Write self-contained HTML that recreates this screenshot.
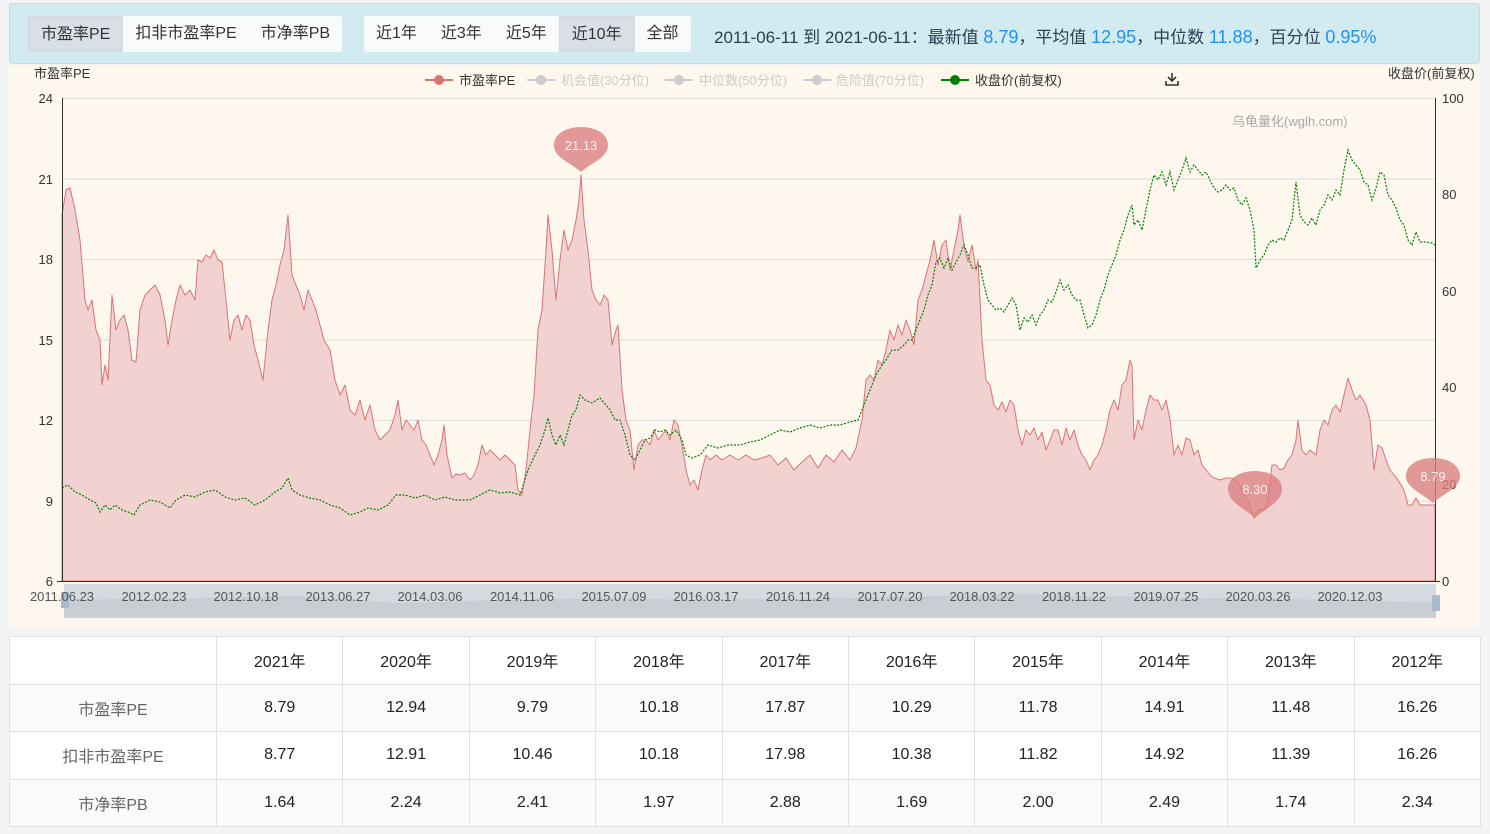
<!DOCTYPE html>
<html><head><meta charset="utf-8"><style>
*{margin:0;padding:0;box-sizing:border-box}
body{width:1490px;height:834px;background:#f4f4f5;font-family:"Liberation Sans","Noto Sans CJK SC",sans-serif;position:relative;overflow:hidden}
.top{position:absolute;left:9px;top:3px;width:1471px;height:61px;background:#d1ebf0;border:1px solid #b8e0ea;border-radius:3px}
.grp{position:absolute;top:12px;height:36px;background:#f8fafc;border-radius:3px;display:flex}
.grp span{display:block;height:36px;line-height:36px;font-size:16px;color:#333;padding:0 12px}
.grp span.act{background:#d9dfe6;border:1px solid #d2d8de}
.info{position:absolute;left:704px;top:19px;font-size:17px;color:#2c3e50;white-space:nowrap}
.info b{font-weight:normal;color:#1e90ff;font-size:18px}
.chart{position:absolute;left:9px;top:66px;width:1471px;height:561px;background:#fdf7ee}
table{position:absolute;left:9px;top:636px;width:1472px;border-collapse:collapse;background:#fff}
td{border:1px solid #dfe1e6;text-align:center;font-size:16px;color:#222;height:47.5px}
td.h{color:#666;width:207px}
tr:nth-child(2) td,tr:nth-child(4) td{background:#fafafa}
</style></head><body>
<div class="top">
<div class="grp" style="left:18px"><span class="act">市盈率PE</span><span>扣非市盈率PE</span><span>市净率PB</span></div>
<div class="grp" style="left:354px"><span>近1年</span><span>近3年</span><span>近5年</span><span class="act">近10年</span><span>全部</span></div>
<div class="info">2011-06-11 到 2021-06-11：最新值 <b>8.79</b>，平均值 <b>12.95</b>，中位数 <b>11.88</b>，百分位 <b>0.95%</b></div>
</div>
<div class="chart"></div>
<svg style="position:absolute;left:0;top:0" width="1490" height="630" font-family="Liberation Sans,Noto Sans CJK SC,sans-serif">
<g stroke="#dcdcdc" stroke-width="1">
<line x1="62" x2="1435" y1="98.5" y2="98.5"/><line x1="62" x2="1435" y1="179" y2="179"/><line x1="62" x2="1435" y1="259.5" y2="259.5"/><line x1="62" x2="1435" y1="340" y2="340"/><line x1="62" x2="1435" y1="420.5" y2="420.5"/><line x1="62" x2="1435" y1="501" y2="501"/>
</g>
<polygon fill="#f2d2d0" stroke="#d97474" stroke-width="1" stroke-linejoin="round" points="62,215 66,190 70,188 75,210 80,240 85,300 88,310 92,300 96,330 100,340 102,385 105,365 108,380 112,295 116,330 120,320 124,315 128,330 132,360 136,362 140,310 145,295 150,290 155,285 160,295 165,320 168,345 172,320 176,300 180,285 185,295 190,290 195,300 198,260 202,262 206,255 210,258 214,250 218,260 222,262 226,300 230,340 234,320 238,315 242,330 246,315 250,320 254,345 258,360 263,380 268,330 272,300 276,285 280,265 284,250 288,215 292,275 296,285 300,295 304,310 308,290 312,300 316,310 320,325 324,340 330,350 335,380 340,395 345,385 350,410 355,415 360,400 365,420 370,405 375,430 380,440 385,435 390,430 395,415 398,400 402,430 406,420 410,425 414,430 418,420 422,440 426,445 430,455 434,465 438,455 442,440 444,425 447,455 452,478 456,474 460,475 465,473 470,480 474,475 478,465 482,445 486,455 490,450 495,455 500,460 505,455 510,460 515,465 518,490 522,495 526,470 530,430 534,395 538,330 542,310 546,250 548,215 552,250 556,300 560,260 564,230 568,250 572,240 576,220 579,200 581,175 584,220 588,250 592,290 596,300 600,305 604,295 608,300 612,345 616,330 618,325 622,390 626,420 630,430 634,470 638,445 642,440 646,440 650,445 654,430 658,440 662,435 666,430 670,440 674,420 678,425 682,445 686,470 690,485 694,480 698,490 702,470 706,455 710,460 716,455 722,460 730,455 738,460 746,455 754,460 762,458 770,455 778,465 786,458 794,470 802,462 810,455 818,468 826,455 834,462 842,450 850,460 856,448 862,420 866,380 870,375 874,380 878,360 882,365 886,350 890,330 894,340 898,325 902,335 906,320 910,330 914,345 918,300 922,290 926,275 930,260 934,240 938,265 942,245 946,240 950,270 954,250 958,230 960,215 964,245 968,262 972,245 976,270 978,260 982,340 986,380 990,385 994,405 998,410 1002,402 1006,412 1010,400 1014,405 1018,430 1022,445 1026,430 1030,435 1034,428 1038,440 1042,432 1046,450 1050,440 1054,430 1058,430 1062,445 1066,428 1070,440 1074,430 1078,445 1082,455 1086,460 1090,470 1094,460 1098,455 1102,445 1106,430 1110,410 1114,400 1118,410 1122,385 1126,380 1130,360 1132,365 1134,440 1138,420 1142,430 1146,410 1150,395 1154,400 1158,400 1162,410 1166,400 1170,420 1174,455 1178,445 1182,455 1186,438 1190,440 1194,455 1198,450 1202,465 1206,470 1210,475 1214,478 1220,480 1226,478 1232,478 1238,482 1244,495 1248,500 1254,518 1258,510 1264,510 1268,500 1272,465 1276,465 1280,470 1284,468 1288,460 1292,455 1296,440 1298,420 1302,450 1306,455 1310,450 1316,455 1320,430 1324,420 1328,425 1332,410 1336,405 1340,412 1344,395 1348,378 1352,390 1356,400 1360,395 1366,405 1370,420 1374,470 1378,445 1382,448 1386,460 1390,470 1394,475 1398,480 1404,490 1408,505 1412,505 1416,498 1420,505 1426,505 1432,505 1435,505 1435,581 62,581"/>
<polyline fill="none" stroke="#008000" stroke-width="1.2" stroke-dasharray="2,1.5" points="62,488 68,485 75,492 82,495 90,500 96,503 100,512 105,505 110,510 115,505 122,510 128,512 134,515 140,505 150,500 160,502 170,508 176,500 185,495 195,497 205,492 215,490 225,497 235,500 245,498 255,505 265,500 275,492 282,488 288,478 292,490 300,495 310,498 320,500 330,505 340,508 350,515 360,512 368,508 378,510 388,505 396,495 405,495 415,498 425,495 435,500 445,497 455,500 470,500 480,495 490,490 500,493 510,492 520,495 528,470 535,455 540,445 545,430 548,418 552,435 556,445 560,435 564,445 568,430 572,415 576,410 580,395 585,400 592,403 600,398 606,405 610,410 615,420 620,420 625,435 630,455 635,460 640,450 645,440 650,438 655,430 660,432 665,430 670,435 676,430 682,440 686,455 692,458 700,455 708,445 718,448 728,445 740,445 750,442 760,440 770,435 780,430 790,432 800,428 810,425 820,428 830,425 840,425 850,422 858,420 862,410 866,400 870,390 876,375 882,365 886,360 892,350 898,350 904,345 908,340 912,340 916,330 920,320 924,310 928,295 932,285 936,262 940,258 944,268 948,258 952,270 956,262 960,255 964,245 968,255 972,268 976,268 980,265 984,285 988,300 992,305 996,310 1000,308 1004,312 1008,305 1012,298 1016,305 1020,330 1024,318 1028,322 1032,315 1036,325 1040,315 1044,310 1048,300 1052,302 1056,292 1060,280 1064,290 1068,285 1072,295 1076,300 1080,300 1084,315 1088,328 1092,325 1096,315 1100,300 1104,290 1108,275 1112,265 1116,255 1120,240 1124,230 1128,215 1132,205 1134,225 1138,220 1142,230 1146,210 1150,190 1154,175 1158,180 1162,172 1166,185 1170,172 1174,190 1178,180 1182,170 1186,158 1190,172 1194,165 1198,170 1202,175 1206,172 1210,180 1214,188 1218,192 1222,190 1226,185 1230,190 1234,188 1238,200 1242,205 1246,198 1250,210 1254,230 1256,268 1260,260 1264,255 1268,245 1272,240 1276,242 1280,238 1284,240 1288,230 1292,220 1296,182 1300,215 1304,222 1308,225 1312,218 1316,225 1320,210 1324,205 1328,195 1332,200 1336,190 1340,195 1344,170 1348,150 1352,160 1356,165 1360,170 1364,182 1368,185 1372,200 1376,188 1380,172 1384,175 1388,195 1392,200 1396,208 1400,220 1404,225 1408,240 1412,245 1416,232 1420,242 1426,242 1432,243 1435,245"/>
<g stroke="#333" stroke-width="1"><line x1="62.5" y1="98" x2="62.5" y2="581"/><line x1="1435.5" y1="98" x2="1435.5" y2="581"/><line x1="57" y1="581.5" x2="1440" y2="581.5"/></g>
<g fill="#333" font-size="13" text-anchor="end"><text x="53" y="103">24</text><text x="53" y="184">21</text><text x="53" y="264">18</text><text x="53" y="345">15</text><text x="53" y="425">12</text><text x="53" y="506">9</text><text x="53" y="586">6</text></g>
<g fill="#333" font-size="13"><text x="1442" y="103">100</text><text x="1442" y="199">80</text><text x="1442" y="296">60</text><text x="1442" y="392">40</text><text x="1442" y="489">20</text><text x="1442" y="586">0</text></g>
<text x="34" y="78" font-size="13" fill="#333">市盈率PE</text>
<text x="1388" y="78" font-size="13" fill="#333">收盘价(前复权)</text>
<text x="1232" y="126" font-size="13" fill="#aaa">乌龟量化(wglh.com)</text>
<g font-size="13">
<line x1="425" x2="453" y1="80" y2="80" stroke="#d97474" stroke-width="2"/><circle cx="439" cy="80" r="5" fill="#d97474"/><text x="459" y="85" fill="#333">市盈率PE</text>
<line x1="527" x2="555" y1="80" y2="80" stroke="#ccc" stroke-width="2"/><circle cx="541" cy="80" r="5" fill="#ccc"/><text x="561" y="85" fill="#ccc">机会值(30分位)</text>
<line x1="665" x2="693" y1="80" y2="80" stroke="#ccc" stroke-width="2"/><circle cx="679" cy="80" r="5" fill="#ccc"/><text x="699" y="85" fill="#ccc">中位数(50分位)</text>
<line x1="803" x2="831" y1="80" y2="80" stroke="#ccc" stroke-width="2"/><circle cx="817" cy="80" r="5" fill="#ccc"/><text x="836" y="85" fill="#ccc">危险值(70分位)</text>
<line x1="941" x2="969" y1="80" y2="80" stroke="#008000" stroke-width="2"/><circle cx="955" cy="80" r="5" fill="#008000"/><text x="975" y="85" fill="#333">收盘价(前复权)</text>
</g>
<path d="M1172 73v8M1168 77l4 4 4-4M1166 81v4h12v-4" stroke="#333" stroke-width="1.6" fill="none"/>
<rect x="64" y="584" width="1372" height="34" fill="#d5dae0"/>
<path d="M64 600 L200 598 300 596 400 603 500 600 600 598 700 600 900 597 1000 594 1200 598 1350 600 1436 603 L1436 618 64 618Z" fill="#c9ced4"/>
<rect x="61" y="592" width="8" height="16" fill="#a9b9cf"/><rect x="1432" y="595" width="8" height="16" fill="#a9b9cf"/>
<g fill="#555" font-size="13" text-anchor="middle"><text x="62" y="601">2011.06.23</text><text x="154" y="601">2012.02.23</text><text x="246" y="601">2012.10.18</text><text x="338" y="601">2013.06.27</text><text x="430" y="601">2014.03.06</text><text x="522" y="601">2014.11.06</text><text x="614" y="601">2015.07.09</text><text x="706" y="601">2016.03.17</text><text x="798" y="601">2016.11.24</text><text x="890" y="601">2017.07.20</text><text x="982" y="601">2018.03.22</text><text x="1074" y="601">2018.11.22</text><text x="1166" y="601">2019.07.25</text><text x="1258" y="601">2020.03.26</text><text x="1350" y="601">2020.12.03</text></g>
<g fill="#d98080" fill-opacity="0.8">
<path d="M581 172 C570 162 554 158 554 145 C554 134 566 127 581 127 C596 127 608 134 608 145 C608 158 592 162 581 172Z"/>
<path d="M1255 518 C1244 508 1228 502 1228 489 C1228 478 1240 471 1255 471 C1270 471 1282 478 1282 489 C1282 502 1266 508 1255 518Z"/>
<path d="M1433 503 C1422 493 1406 488 1406 476 C1406 465 1418 458 1433 458 C1448 458 1460 465 1460 476 C1460 488 1444 493 1433 503Z"/>
</g>
<g fill="#fff" fill-opacity="0.85" font-size="13" text-anchor="middle"><text x="581" y="150">21.13</text><text x="1255" y="494">8.30</text><text x="1433" y="481">8.79</text></g>
</svg>
<table>
<tr><td class="h"></td><td>2021年</td><td>2020年</td><td>2019年</td><td>2018年</td><td>2017年</td><td>2016年</td><td>2015年</td><td>2014年</td><td>2013年</td><td>2012年</td></tr>
<tr><td class="h">市盈率PE</td><td>8.79</td><td>12.94</td><td>9.79</td><td>10.18</td><td>17.87</td><td>10.29</td><td>11.78</td><td>14.91</td><td>11.48</td><td>16.26</td></tr>
<tr><td class="h">扣非市盈率PE</td><td>8.77</td><td>12.91</td><td>10.46</td><td>10.18</td><td>17.98</td><td>10.38</td><td>11.82</td><td>14.92</td><td>11.39</td><td>16.26</td></tr>
<tr><td class="h">市净率PB</td><td>1.64</td><td>2.24</td><td>2.41</td><td>1.97</td><td>2.88</td><td>1.69</td><td>2.00</td><td>2.49</td><td>1.74</td><td>2.34</td></tr>
</table>
</body></html>
